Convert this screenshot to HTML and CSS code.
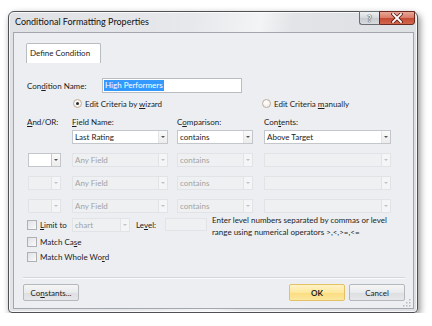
FILE: index.html
```html
<!DOCTYPE html>
<html>
<head>
<meta charset="utf-8">
<link rel="stylesheet" href="styles.css">
</head>
<body>
<div class="stage">
  <div class="window">
    <div class="titlebar">
      <span class="title">Conditional Formatting Properties</span>
      <div class="caps">
        <span class="capbtn cap-help">?</span>
        <span class="capbtn cap-close">
          <svg width="12" height="10" viewBox="0 0 12 10"><path d="M2 1 L10 9 M10 1 L2 9" stroke="#5a1a10" stroke-width="3.4" stroke-linecap="square"/><path d="M2 1 L10 9 M10 1 L2 9" stroke="#fff" stroke-width="1.8" stroke-linecap="square"/></svg>
        </span>
      </div>
    </div>
    <div class="client">
      <div class="tabs"><div class="tab">Define Condition</div></div>
      <div class="panel">
        <div class="name-row">
          <label class="name-label">Con<u>d</u>ition Name:</label>
          <div class="text-input"><span class="sel">High Performers</span></div>
        </div>
        <div class="radio-row">
          <div class="opt opt1"><span class="radio on"></span><span>Edit Criteria by <u>w</u>izard</span></div>
          <div class="opt"><span class="radio"></span><span>Edit Criteria <u>m</u>anually</span></div>
        </div>
        <div class="grid hdr">
          <span><u>A</u>nd/OR:</span>
          <span><u>F</u>ield Name:</span>
          <span>C<u>o</u>mparison:</span>
          <span>Con<u>t</u>ents:</span>
        </div>
        <div class="grid rows">
          <span></span>
          <div class="combo w-field"><span class="val">Last Rating</span><span class="arr"></span></div>
          <div class="combo w-comp"><span class="val">contains</span><span class="arr"></span></div>
          <div class="combo w-cont"><span class="val">Above Target</span><span class="arr"></span></div>

          <div class="combo w-andor"><span class="val"></span><span class="arr sep-arr"></span></div>
          <div class="combo dis w-field"><span class="val">Any Field</span><span class="arr"></span></div>
          <div class="combo dis w-comp"><span class="val">contains</span><span class="arr"></span></div>
          <div class="combo dis w-cont"><span class="val"></span><span class="arr"></span></div>

          <div class="combo dis w-andor"><span class="val"></span><span class="arr"></span></div>
          <div class="combo dis w-field"><span class="val">Any Field</span><span class="arr"></span></div>
          <div class="combo dis w-comp"><span class="val">contains</span><span class="arr"></span></div>
          <div class="combo dis w-cont"><span class="val"></span><span class="arr"></span></div>

          <div class="combo dis w-andor"><span class="val"></span><span class="arr"></span></div>
          <div class="combo dis w-field"><span class="val">Any Field</span><span class="arr"></span></div>
          <div class="combo dis w-comp"><span class="val">contains</span><span class="arr"></span></div>
          <div class="combo dis w-cont"><span class="val"></span><span class="arr"></span></div>
        </div>
        <div class="limit-row">
          <div class="limit-check"><span class="checkbox"></span><span class="lbl"><u>L</u>imit to</span></div>
          <div class="combo dis w-chart"><span class="val">chart</span><span class="arr"></span></div>
          <span class="level-lbl">Le<u>v</u>el:</span>
          <div class="level-input"></div>
          <div class="help-text">Enter level numbers separated by commas or level<br>range using numerical operators &gt;,&lt;,&gt;=,&lt;=</div>
        </div>
        <div class="chk-row"><span class="checkbox"></span><span>Match Ca<u>s</u>e</span></div>
        <div class="chk-row"><span class="checkbox"></span><span>Match Whole Wo<u>r</u>d</span></div>
      </div>
      <div class="separator"></div>
      <div class="footer">
        <button class="btn">Co<u>n</u>stants...</button>
        <div class="right-btns">
          <button class="btn ok">OK</button>
          <button class="btn">Cancel</button>
        </div>
      </div>
    </div>
    <svg class="grip" width="8" height="8" viewBox="0 0 8 8">
      <g fill="#b8bcc2"><rect x="6" y="0" width="1.5" height="1.5"/><rect x="3" y="3" width="1.5" height="1.5"/><rect x="6" y="3" width="1.5" height="1.5"/><rect x="0" y="6" width="1.5" height="1.5"/><rect x="3" y="6" width="1.5" height="1.5"/><rect x="6" y="6" width="1.5" height="1.5"/></g>
    </svg>
  </div>
</div>
</body>
</html>
```
FILE: styles.css
```css
* { box-sizing: border-box; }
body {
  margin: 0;
  background: #fff;
  font-family: Lato, "Open Sans", sans-serif;
  font-size: 8px;
  color: #1c1c1c;
}
u { text-decoration: underline; text-underline-offset: 1px; }
.stage { padding: 11px 0 0 8px; }
.window {
  position: relative;
  width: 410px;
  height: 302px;
  border: 1px solid #4f5154;
  border-radius: 6px 6px 4px 4px;
  background: linear-gradient(100deg, #dfe1e4 0%, #e6e8eb 40%, #f3f4f5 55%, #e2e4e7 62%, #dcdfe3 100%);
  box-shadow: 2px 3px 7px rgba(0,0,0,.45), inset 0 0 0 1px rgba(255,255,255,.75);
  display: flex;
  flex-direction: column;
}
.titlebar {
  height: 20px;
  display: flex;
  justify-content: space-between;
  align-items: flex-start;
}
.title {
  padding-left: 6px;
  line-height: 20px;
  font-size: 9px;
  color: #111;
}
.caps { display: flex; margin-right: 2px; margin-top: -1px; }
.capbtn {
  height: 14px;
  display: flex;
  align-items: center;
  justify-content: center;
  border: 1px solid #6a6d72;
}
.cap-help {
  width: 20px;
  border-right: none;
  border-radius: 0 0 0 3px;
  background: linear-gradient(#eef0f2, #d5d8dc 50%, #c6cace 51%, #d9dcdf);
  color: #fff;
  font-weight: bold;
  font-size: 9px;
  text-shadow: 0 0 1px #444, 0 0 1px #444, 0 0 1px #444;
}
.cap-close {
  width: 36px;
  border-color: #6a2a20;
  border-radius: 0 0 3px 0;
  background: linear-gradient(#e9a898, #d77a66 50%, #c54a33 51%, #d2664c);
}
.client {
  margin: 0 3px 3px 4px;
  height: 277px;
  border: 1px solid #a3a7ad;
  background: #eceef1;
  display: flex;
  flex-direction: column;
}
.tabs { padding: 10px 0 0 12px; }
.tab {
  width: 75px;
  height: 20px;
  border: 1px solid #b9bcc1;
  border-bottom: none;
  border-radius: 2px 2px 0 0;
  background: #fff;
  padding-left: 3px;
  line-height: 19px;
}
.panel { padding-left: 13px; }
.name-row { margin-top: 15px; height: 15px; display: flex; align-items: center; }
.name-label { width: 75px; }
.text-input {
  width: 140px;
  height: 15px;
  border: 1px solid #b9bcc1;
  background: #fff;
  padding: 1px;
  display: flex;
}
.sel { background: #3399ff; color: #fff; padding: 0 1px; line-height: 11px; }
.radio-row { margin-top: 5px; height: 11px; display: flex; align-items: center; padding-left: 46px; }
.opt { display: flex; align-items: center; gap: 3px; }
.opt1 { width: 189px; }
.radio {
  width: 9px;
  height: 9px;
  border-radius: 50%;
  border: 1px solid #c3ab94;
  background: radial-gradient(circle at 40% 35%, #fff, #e9e9e9);
  display: flex;
  align-items: center;
  justify-content: center;
}
.radio.on::after {
  content: '';
  width: 3px;
  height: 3px;
  border-radius: 50%;
  background: #2a2a2a;
}
.grid { display: grid; grid-template-columns: 45px 105px 87px 127px; }
.hdr { margin-top: 7px; height: 12px; line-height: 12px; }
.rows { margin-top: 2px; row-gap: 9px; grid-auto-rows: 14px; }
.combo {
  height: 14px;
  display: flex;
  border: 1px solid #c3c6ca;
  background: #fff;
}
.combo .val { flex: 1; padding-left: 2px; line-height: 12px; overflow: hidden; white-space: nowrap; }
.combo .arr {
  width: 9px;
  border-left: 1px solid #e3e4e6;
  background: linear-gradient(#fafafa, #ececec);
  display: flex;
  align-items: center;
  justify-content: center;
}
.combo .arr::after {
  content: '';
  border-left: 2px solid transparent;
  border-right: 2px solid transparent;
  border-top: 2px solid #555;
}
.combo .sep-arr { margin-left: 1px; border-left-color: #c3c6ca; }
.combo.dis { background: #eef0f2; border-color: #e1e3e6; color: #a3a3a3; }
.combo.dis .arr { background: #f4f5f7; border-left-color: #e1e3e6; }
.combo.dis .arr::after { border-top-color: #c2c2c2; }
.w-andor { width: 33px; margin-left: 1px; }
.w-field { width: 96px; }
.w-comp { width: 76px; }
.w-cont { width: 127px; }
.w-chart { width: 58px; height: 14px; margin-top: 2px; }
.limit-row { margin-top: 3px; height: 18px; display: flex; align-items: flex-start; }
.limit-check { width: 45px; display: flex; align-items: center; gap: 3px; height: 18px; }
.checkbox {
  width: 10px;
  height: 10px;
  border: 1px solid #adb0b5;
  background: linear-gradient(135deg, #dfe1e4, #fafafa);
  flex: none;
}
.level-lbl { margin-left: 6px; width: 29px; line-height: 18px; }
.level-input {
  width: 42px;
  height: 13px;
  margin-top: 2px;
  border: 1px solid #e1e3e6;
  background: #eef0f2;
}
.help-text { margin-left: 5px; line-height: 12px; white-space: nowrap; margin-top: -2px; }
.chk-row { height: 15px; display: flex; align-items: center; gap: 3px; }
.separator {
  margin: 13px 8px 0 9px;
  border-top: 1px solid #d3d5d9;
  border-bottom: 1px solid #fafbfc;
}
.footer {
  margin-top: 5px;
  padding: 0 8px 0 9px;
  display: flex;
  justify-content: space-between;
}
.right-btns { display: flex; gap: 4px; }
.btn {
  width: 56px;
  height: 17px;
  padding: 0;
  font: inherit;
  color: #1c1c1c;
  border: 1px solid #b4b7bb;
  border-radius: 2px;
  background: linear-gradient(#f6f6f7, #e9eaec 50%, #dcdee1 51%, #e6e7e9);
}
.btn.ok {
  font-weight: bold;
  border-color: #e3c266;
  background: linear-gradient(#fff3c6, #fde89e 50%, #fbdc7c 51%, #fde7a0);
}
.grip { position: absolute; right: 6px; bottom: 5px; }
```
